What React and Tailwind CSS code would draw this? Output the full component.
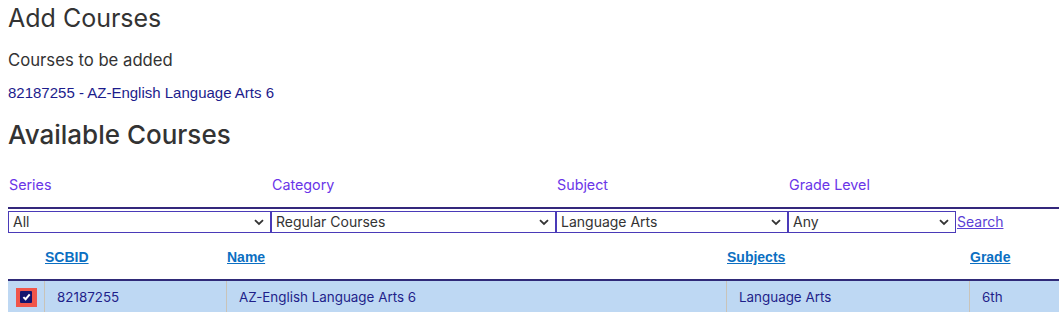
import React from "react";

function FakeSelect({ value, className }) {
  return (
    <div
      className={`box-border flex h-[22px] shrink-0 items-center justify-between border border-[#4a3ab8] bg-white pl-[4px] pr-[6px] text-[14px] leading-[20px] text-[#333] ${className}`}
    >
      <span>{value}</span>
      <svg width="10" height="7" viewBox="0 0 10 7" className="shrink-0">
        <path d="M1 1.2 L5 5 L9 1.2" fill="none" stroke="#333" strokeWidth="1.8" />
      </svg>
    </div>
  );
}

export default function App() {
  return (
    <div className="h-[312px] overflow-hidden bg-white pl-2 font-['Inter','Noto_Sans',sans-serif] text-[#333]">
      <h2 className="text-[25px] font-normal leading-[36px]">Add Courses</h2>
      <p className="mt-[12px] text-[16.7px] leading-[24px]">Courses to be added</p>
      <p className="mt-[11px] font-['Liberation_Sans',Arial,sans-serif] text-[15px] leading-[20px] text-[#1c1c8c]">
        82187255 - AZ-English Language Arts 6
      </p>
      <h2 className="mt-[14px] text-[26px] font-medium leading-[36px]">Available Courses</h2>

      <div className="mt-[22px]">
        <div className="grid grid-cols-[263px_285px_232px_168px_1fr] border-b-2 border-[#34287c] pb-[12px] text-[14.3px] leading-[20px] text-[#6a35e8]">
          <div className="pl-px">Series</div>
          <div className="pl-px">Category</div>
          <div className="pl-px">Subject</div>
          <div className="pl-px">Grade Level</div>
          <div></div>
        </div>
        <div className="mt-[2px] flex items-center">
          <FakeSelect value="All" className="w-[263px]" />
          <FakeSelect value="Regular Courses" className="w-[285px]" />
          <FakeSelect value="Language Arts" className="w-[232px]" />
          <FakeSelect value="Any" className="w-[168px]" />
          <a href="#" className="ml-px text-[14px] leading-[20px] text-[#5b3fd6] underline">
            Search
          </a>
        </div>
      </div>

      <div className="mt-[14px]">
        <div className="grid grid-cols-[36px_182px_500px_243px_1fr] border-b-2 border-[#2f2a78] pb-[12px] font-['Liberation_Sans',Arial,sans-serif] text-[14px] font-bold leading-[20px] text-[#0b6fc2]">
          <div></div>
          <div className="pl-px"><a href="#" className="underline">SCBID</a></div>
          <div className="pl-px"><a href="#" className="underline">Name</a></div>
          <div className="pl-px"><a href="#" className="underline">Subjects</a></div>
          <div className="pl-px"><a href="#" className="underline">Grade</a></div>
        </div>
        <div className="grid h-[32px] grid-cols-[36px_182px_500px_243px_1fr] bg-[#bed8f3] text-[13.4px] leading-[18px] text-[#1f1f8a]">
          <div className="flex items-center justify-center">
            <div className="box-border flex h-[19px] w-[21px] shrink-0 items-center justify-center bg-[#f0554a]">
              <div className="flex h-[12px] w-[12px] shrink-0 items-center justify-center rounded-[1px] bg-[#14146e]">
                <svg width="9" height="8" viewBox="0 0 10 9">
                  <path d="M1.5 4.6 L4 7 L8.6 1.6" fill="none" stroke="#fff" strokeWidth="2.2" />
                </svg>
              </div>
            </div>
          </div>
          <div className="flex items-center border-l border-[#c9c3b8] pl-3">82187255</div>
          <div className="flex items-center border-l border-[#c9c3b8] pl-3">AZ-English Language Arts 6</div>
          <div className="flex items-center border-l border-[#c9c3b8] pl-3">Language Arts</div>
          <div className="flex items-center border-l border-[#c9c3b8] pl-3">6th</div>
        </div>
      </div>
    </div>
  );
}
